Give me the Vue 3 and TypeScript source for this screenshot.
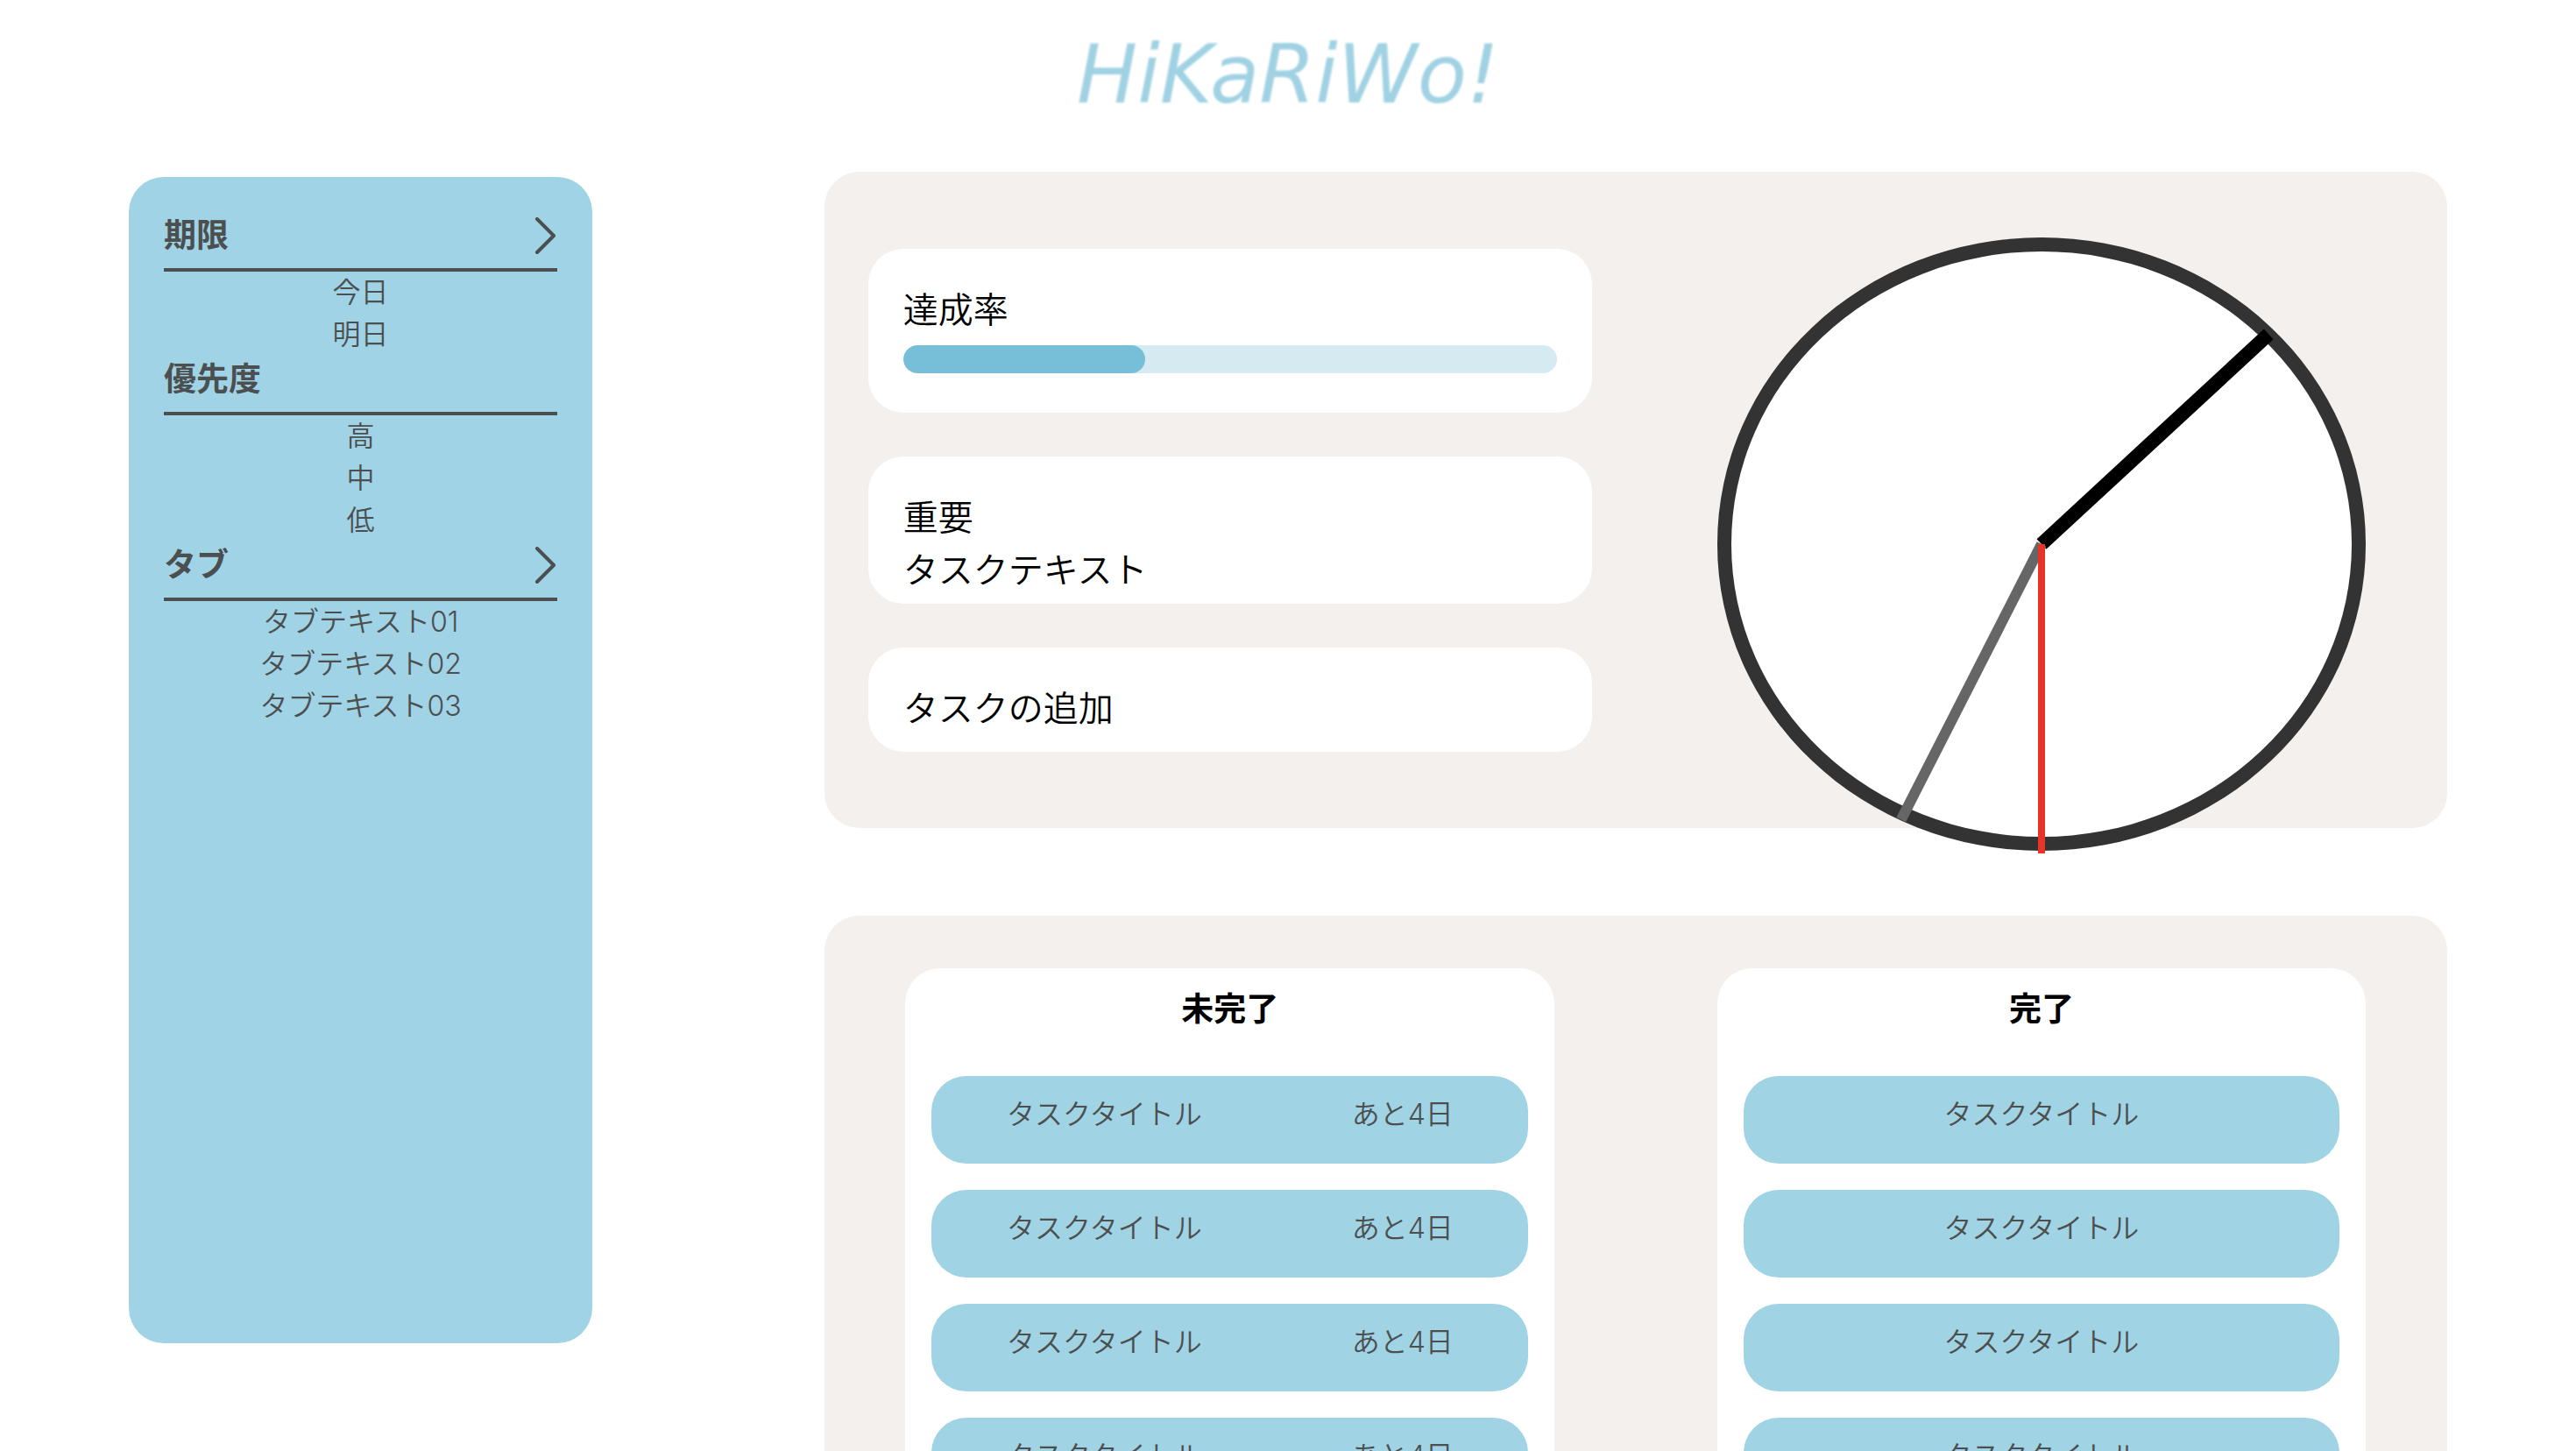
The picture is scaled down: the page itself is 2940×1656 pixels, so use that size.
<script setup lang="ts">
interface FilterGroup {
  title: string
  expandable: boolean
  items: string[]
}

interface Task {
  id: number
  title: string
  daysLeft: number
}

const groups: FilterGroup[] = [
  { title: '期限', expandable: true, items: ['今日', '明日'] },
  { title: '優先度', expandable: false, items: ['高', '中', '低'] },
  { title: 'タブ', expandable: true, items: ['タブテキスト01', 'タブテキスト02', 'タブテキスト03'] },
]

const tasks: Task[] = [1, 2, 3, 4, 5].map((id) => ({ id, title: 'タスクタイトル', daysLeft: 4 }))

const achievement = 37

const time = { hours: 1, minutes: 34, seconds: 30 }
const minuteAngle = (time.minutes + time.seconds / 60) * 6
const hourAngle = time.hours * 30 + minuteAngle / 12
const hands = [
  { name: 'hour', angle: hourAngle },
  { name: 'minute', angle: minuteAngle },
  { name: 'second', angle: time.seconds * 6 },
]
</script>

<template>
  <div class="page">
    <header class="header">
      <h1 class="logo">HiKaRiWo!</h1>
    </header>

    <div class="body">
      <nav class="sidebar" aria-label="絞り込み">
        <section v-for="group in groups" :key="group.title">
          <div class="group-head">
            <h2 class="heading">{{ group.title }}</h2>
            <button v-if="group.expandable" class="toggle" type="button" :aria-label="group.title">
              <svg class="chevron" viewBox="0 0 24 42" aria-hidden="true">
                <path d="M3 2 L22 21 L3 40" />
              </svg>
            </button>
          </div>
          <ul class="group-items">
            <li v-for="item in group.items" :key="item">
              <a class="filter" href="#">{{ item }}</a>
            </li>
          </ul>
        </section>
      </nav>

      <main class="main">
        <section class="panel summary">
          <div class="cards">
            <div class="card card-rate">
              <label for="rate">達成率</label>
              <progress id="rate" class="bar" :value="achievement" max="100"></progress>
            </div>
            <div class="card card-important">
              <p>重要</p>
              <p>タスクテキスト</p>
            </div>
            <button class="card card-add" type="button">タスクの追加</button>
          </div>
          <div class="clock-area">
            <div class="clock">
              <span
                v-for="hand in hands"
                :key="hand.name"
                class="hand"
                :class="hand.name"
                :style="{ transform: `translateX(-50%) rotate(${hand.angle}deg)` }"
              ></span>
            </div>
          </div>
        </section>

        <section class="panel board">
          <div class="column">
            <h2 class="heading column-title">未完了</h2>
            <ul class="tasks">
              <li v-for="task in tasks" :key="task.id" class="task">
                <span>{{ task.title }}</span>
                <span>あと{{ task.daysLeft }}日</span>
              </li>
            </ul>
          </div>
          <div class="column">
            <h2 class="heading column-title">完了</h2>
            <ul class="tasks">
              <li v-for="task in tasks" :key="task.id" class="task">
                <span>{{ task.title }}</span>
              </li>
            </ul>
          </div>
        </section>
      </main>
    </div>
  </div>
</template>

<style>
body {
  margin: 0;
  background: #fff;
}
</style>

<style scoped>
.page {
  height: 100vh;
  overflow-y: auto;
  scrollbar-width: none;
  font-family: Inter, 'Noto Sans CJK JP', sans-serif;
  font-size: 32px;
  font-weight: 350;
  line-height: 48px;
  color: #000;
}

h1,
h2,
p,
ul {
  margin: 0;
  padding: 0;
}

ul {
  list-style: none;
}

.header {
  display: flex;
  justify-content: center;
  height: 196px;
}

.logo {
  padding-top: 30px;
  font-family: 'DejaVu Sans', sans-serif;
  font-size: 92px;
  font-style: italic;
  font-weight: 400;
  line-height: 112px;
  color: #a0d2e3;
  filter: blur(1px);
}

.body {
  display: flex;
  align-items: flex-start;
  justify-content: space-between;
  padding: 0 5% 100px;
}

/* 20% of the padded row is 18% of the window, the main area takes 63%. */
.sidebar {
  box-sizing: border-box;
  width: 20%;
  min-height: calc(100vh - 325px);
  margin-top: 6px;
  padding: 40px;
  border-radius: 40px;
  background: #a0d3e5;
  color: #4c4f50;
}

.heading {
  font-size: 37px;
  font-weight: 700;
  line-height: 54px;
}

.group-head {
  display: flex;
  justify-content: space-between;
  padding-bottom: 10px;
  border-bottom: 4px solid #4c4f50;
}

.toggle {
  display: flex;
  align-items: center;
  padding: 0 2px 0 0;
  border: 0;
  background: none;
  color: inherit;
}

.chevron {
  width: 24px;
  height: 42px;
  fill: none;
  stroke: currentColor;
  stroke-width: 4;
  stroke-linecap: round;
  stroke-linejoin: round;
}

.group-items {
  text-align: center;
}

.filter {
  color: inherit;
  text-decoration: none;
}

.main {
  display: flex;
  flex-direction: column;
  gap: 100px;
  width: 70%;
}

.panel {
  display: flex;
  border-radius: 40px;
  background: #f3f0ed;
}

.summary {
  height: 749px;
}

.cards {
  box-sizing: border-box;
  display: flex;
  flex-direction: column;
  justify-content: center;
  gap: 50px;
  width: 50%;
  padding: 0 50px;
}

.card {
  box-sizing: border-box;
  display: block;
  width: 100%;
  padding: 40px 40px 0;
  border: 0;
  border-radius: 40px;
  background: #fff;
  color: inherit;
  font: inherit;
  font-size: 40px;
  line-height: 60px;
  text-align: left;
}

.card-rate {
  display: flex;
  flex-direction: column;
  gap: 10px;
  padding-bottom: 45px;
}

.card-important {
  padding-bottom: 8px;
}

.card-add {
  padding-bottom: 19px;
}

.bar {
  display: block;
  width: 100%;
  height: 32px;
  appearance: none;
  border: 0;
  border-radius: 16px;
  overflow: hidden;
  background: #d5ebf1;
}

.bar::-webkit-progress-bar {
  background: #d5ebf1;
}

.bar::-webkit-progress-value {
  border-radius: 16px;
  background: #77bfd9;
}

.clock-area {
  display: flex;
  justify-content: center;
  align-items: flex-start;
  width: 50%;
  padding-top: 75px;
}

.clock {
  position: relative;
  box-sizing: border-box;
  width: 80%;
  height: 700px;
  border: 16px solid #333;
  border-radius: 50%;
  background: #fff;
}

.hand {
  position: absolute;
  bottom: 50%;
  left: 50%;
  height: 353px;
  transform-origin: bottom center;
}

.hour {
  width: 16px;
  background: #000;
}

.minute {
  width: 12px;
  background: #666;
}

.second {
  width: 8px;
  background: #e63428;
}

.board {
  align-items: flex-start;
  justify-content: space-around;
  padding: 60px 0;
}

.column {
  box-sizing: border-box;
  width: 40%;
  padding: 20px 30px 30px;
  border-radius: 40px;
  background: #fff;
}

.column-title {
  padding-bottom: 49px;
  text-align: center;
}

.tasks {
  display: flex;
  flex-direction: column;
  gap: 30px;
}

.task {
  box-sizing: border-box;
  display: flex;
  justify-content: space-around;
  height: 100px;
  padding-top: 20px;
  border-radius: 40px;
  background: #a0d3e3;
  color: #4c4f50;
}
</style>
